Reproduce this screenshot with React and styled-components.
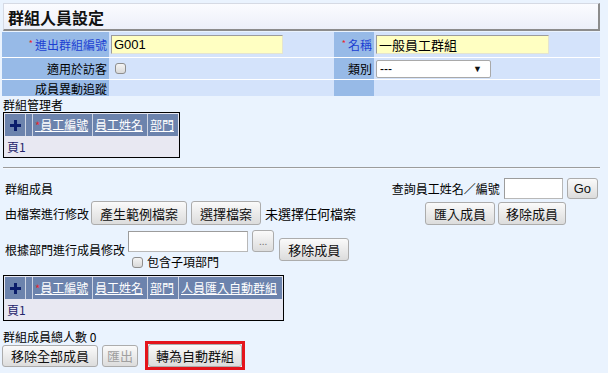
import React from 'react';
import styled, { createGlobalStyle } from 'styled-components';

const GlobalStyle = createGlobalStyle`
    html, body {
        margin: 0;
        padding: 0;
        background: #eaf3fe;
    }
    body {
        font-family: "Noto Sans CJK TC", "Liberation Sans", sans-serif;
        font-size: 12px;
        color: #000;
    }
`;

const Page = styled.div`
    width: 608px;
    height: 373px;
    box-sizing: border-box;
    padding: 3px 8px 0 2px;
    display: flex;
    flex-direction: column;
    overflow: hidden;

    & > * {
        flex-shrink: 0;
    }
`;

const TitleBar = styled.div`
    height: 28px;
    box-sizing: border-box;
    margin-left: 1px;
    padding-left: 4px;
    display: flex;
    align-items: center;
    border-top: 1px solid #d6dae4;
    border-left: 1px solid #d6dae4;
    border-right: 2px solid #8c8c8c;
    border-bottom: 2px solid #8c8c8c;
    background: linear-gradient(#fbfcff, #eceff9);
    font-size: 16px;
    font-weight: 700;
    color: #111;
`;

const Form = styled.div`
    margin-top: 1px;
    display: grid;
    grid-template-columns: 107px 225px 40px 1fr;
    grid-template-rows: 25px 21px 16px;
    row-gap: 1px;
    background: #ffffff;
`;

const LabelCell = styled.div`
    background: #97bae7;
    display: flex;
    align-items: center;
    justify-content: flex-end;
    padding-right: 2px;
    font-size: 12px;
    color: ${p => (p.$required ? '#1c3fd2' : '#000')};
`;

const ValueCell = styled.div`
    background: #d4e3fb;
    display: flex;
    align-items: center;
    padding-left: 2px;
`;

const Star = styled.span`
    color: #e8262c;
    font-size: 9px;
    margin-right: 2px;
    align-self: flex-start;
    margin-top: 5px;
`;

const TextInput = styled.div`
    width: ${p => p.$w}px;
    height: ${p => p.$h || 19}px;
    box-sizing: border-box;
    background: ${p => (p.$yellow ? '#ffffc2' : '#fff')};
    border-top: 1px solid #9c9c9c;
    border-left: 1px solid #9c9c9c;
    border-right: 1px solid ${p => (p.$yellow ? '#e4e4d0' : '#b8b8b8')};
    border-bottom: 1px solid ${p => (p.$yellow ? '#e4e4d0' : '#b8b8b8')};
    display: flex;
    align-items: center;
    padding-left: 2px;
    font-size: 13px;
    font-family: "Liberation Sans", "Noto Sans CJK TC", sans-serif;
`;

const Select = styled.div`
    width: 115px;
    height: 18px;
    box-sizing: border-box;
    background: #fff;
    border: 1px solid #a9a9a9;
    border-radius: 2px;
    display: flex;
    align-items: center;
    justify-content: space-between;
    padding: 0 8px 0 3px;
    font-size: 12px;
    font-family: "Liberation Sans", sans-serif;
`;

const Arrow = styled.span`
    font-size: 9px;
    color: #111;
`;

const Check = styled.span`
    display: inline-block;
    width: 11px;
    height: 11px;
    box-sizing: border-box;
    border: 1px solid #8e8e8e;
    border-radius: 3px;
    background: linear-gradient(#f4f4f4, #d9d9d9);
    margin: ${p => p.$m || '0'};
`;

const Caption = styled.div`
    margin-top: ${p => (p.$mt === undefined ? 1 : p.$mt)}px;
    height: ${p => p.$h || 15}px;
    line-height: ${p => p.$h || 15}px;
    padding-left: 1px;
    font-size: 12px;
`;

const GridBox = styled.div`
    align-self: flex-start;
    margin-left: 1px;
    margin-top: ${p => p.$mt || 0}px;
    border: 1px solid #000;
    background: #e8e8f2;
    display: flex;
    flex-direction: column;
`;

const GridHead = styled.div`
    display: flex;
    gap: 1px;
    margin: 1px 1px 0 1px;
    height: 22px;
    background: #cdd4e3;
`;

const HeadCell = styled.div`
    width: ${p => p.$w}px;
    flex: none;
    background: #6c83ad;
    color: #fff;
    line-height: 22px;
    text-align: ${p => (p.$center ? 'center' : 'left')};
    padding-left: ${p => (p.$center ? 0 : 2)}px;
    box-sizing: border-box;
    text-decoration: underline;
    font-size: 12px;
    white-space: nowrap;
    overflow: hidden;

    svg {
        vertical-align: -1px;
    }
`;

const ReqMark = styled.span`
    color: #e8262c;
    font-size: 11px;
`;

const GridBody = styled.div`
    height: 21px;
    display: flex;
    align-items: center;
    padding-left: 3px;
    color: #24246a;
    font-size: 12px;
`;

const Rule = styled.div`
    margin: 9px 0 0 1px;
    height: 1px;
    background: #9c9c9c;
    box-shadow: 0 1px 0 #f4f8ff;
`;

const Row = styled.div`
    display: flex;
    align-items: center;
    margin-top: ${p => p.$mt || 0}px;
    height: ${p => (p.$h ? `${p.$h}px` : 'auto')};
    gap: ${p => (p.$gap === undefined ? 4 : p.$gap)}px;
`;

const Spacer = styled.div`
    flex: 1;
`;

const Text = styled.span`
    font-size: ${p => p.$size || 12}px;
    white-space: nowrap;
    margin-left: ${p => p.$ml || 0}px;
`;

const Button = styled.button`
    height: ${p => p.$h || 23}px;
    padding: 0 ${p => (p.$px === undefined ? 8 : p.$px)}px;
    box-sizing: border-box;
    border: 1px solid #acacac;
    border-radius: 3px;
    background: linear-gradient(#fafafa, #dcdcdc);
    font-family: "Noto Sans CJK TC", "Liberation Sans", sans-serif;
    font-size: 13px;
    color: ${p => (p.disabled ? '#a0a0a0' : '#111')};
    white-space: nowrap;
    line-height: 1;
    margin: 0;
`;

const Highlight = styled.div`
    border: 3px solid #e4141b;
    display: flex;
    margin-left: 3px;
`;

const DeptPicker = styled.div`
    display: flex;
    flex-direction: column;
    margin-left: 3px;
`;

const CheckLabel = styled.label`
    display: flex;
    align-items: center;
    height: 14px;
    line-height: 14px;
    margin-top: 3px;
    margin-left: 4px;
    font-size: 12px;
    gap: 4px;
`;

const PlusIcon = () => (
    <svg width="11" height="11" viewBox="0 0 11 11">
        <rect x="4" y="0" width="3" height="11" fill="#0b1d6b" />
        <rect x="0" y="4" width="11" height="3" fill="#0b1d6b" />
    </svg>
);

const DataGrid = ({ extra, mt }) => (
    <GridBox $mt={mt}>
        <GridHead>
            <HeadCell $w={20} $center><PlusIcon /></HeadCell>
            <HeadCell $w={6} />
            <HeadCell $w={59}><ReqMark>*</ReqMark>員工編號</HeadCell>
            <HeadCell $w={54}>員工姓名</HeadCell>
            <HeadCell $w={30}>部門</HeadCell>
            {extra && <HeadCell $w={103}>{extra}</HeadCell>}
        </GridHead>
        <GridBody>頁1</GridBody>
    </GridBox>
);

export default function App() {
    return (
        <>
            <GlobalStyle />
            <Page>
                <TitleBar>群組人員設定</TitleBar>
                <Form>
                    <LabelCell $required><Star>*</Star>進出群組編號</LabelCell>
                    <ValueCell><TextInput $w={172} $yellow>G001</TextInput></ValueCell>
                    <LabelCell $required><Star>*</Star>名稱</LabelCell>
                    <ValueCell><TextInput $w={173} $yellow>一般員工群組</TextInput></ValueCell>

                    <LabelCell>適用於訪客</LabelCell>
                    <ValueCell><Check $m="0 0 0 4px" /></ValueCell>
                    <LabelCell>類別</LabelCell>
                    <ValueCell><Select>---<Arrow>▼</Arrow></Select></ValueCell>

                    <LabelCell>成員異動追蹤</LabelCell>
                    <ValueCell />
                    <LabelCell />
                    <ValueCell />
                </Form>

                <Caption>群組管理者</Caption>
                <DataGrid />

                <Rule />

                <Row $mt={10} $h={21}>
                    <Text $ml={3}>群組成員</Text>
                    <Spacer />
                    <Text>查詢員工姓名／編號</Text>
                    <TextInput $w={59} $h={21} />
                    <Button $h={21} $px={6} style={{ marginRight: 2, fontFamily: '"Liberation Sans", sans-serif' }}>Go</Button>
                </Row>

                <Row $mt={2} $h={24}>
                    <Text $ml={3}>由檔案進行修改</Text>
                    <Button $h={24} style={{ marginLeft: -2 }}>產生範例檔案</Button>
                    <Button $h={24}>選擇檔案</Button>
                    <Text $size={13}>未選擇任何檔案</Text>
                    <Spacer />
                    <Button $px={8}>匯入成員</Button>
                    <Button $px={7} style={{ marginLeft: -1, marginRight: 34 }}>移除成員</Button>
                </Row>

                <Row $mt={5} $gap={0}>
                    <Text $ml={3}>根據部門進行成員修改</Text>
                    <DeptPicker>
                        <Row $gap={4}>
                            <TextInput $w={120} $h={21} />
                            <Button $h={22} $px={6} style={{ color: '#777', fontSize: 10 }}>...</Button>
                        </Row>
                        <CheckLabel><Check />包含子項部門</CheckLabel>
                    </DeptPicker>
                    <Button style={{ marginLeft: 5 }}>移除成員</Button>
                </Row>

                <DataGrid extra="人員匯入自動群組" mt={6} />

                <Caption $mt={9} $h={13}>群組成員總人數 0</Caption>
                <Row $mt={-2} $gap={4}>
                    <Button $h={22}>移除全部成員</Button>
                    <Button $h={22} $px={4} disabled>匯出</Button>
                    <Highlight><Button $px={7}>轉為自動群組</Button></Highlight>
                </Row>
            </Page>
        </>
    );
}
